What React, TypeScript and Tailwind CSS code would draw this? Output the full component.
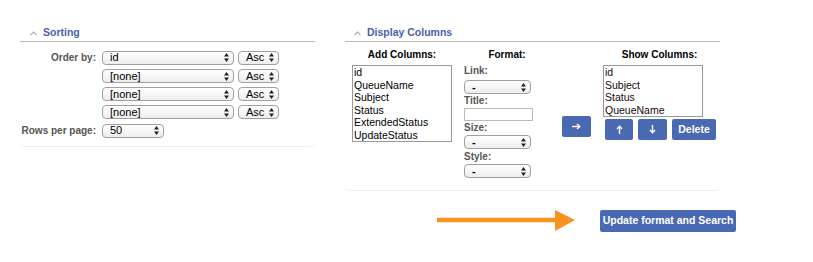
import React from "react";

const font = { fontFamily: '"Liberation Sans", Arial, sans-serif' };

function Updown() {
  return (
    <svg width="5" height="9" viewBox="0 0 5 9" className="shrink-0">
      <polygon points="2.5,0 5,3.5 0,3.5" fill="#222" />
      <polygon points="0,5.5 5,5.5 2.5,9" fill="#222" />
    </svg>
  );
}

function Sel({ value, className }: { value: string; className: string }) {
  return (
    <div
      className={`${className} h-[14px] flex items-center justify-between rounded-[4px] border border-[#a0a0a0] bg-gradient-to-b from-white to-[#ededed] pl-[7px] pr-[4px] text-[11px] leading-none text-black`}
    >
      <span>{value}</span>
      <Updown />
    </div>
  );
}

function Chevron() {
  return (
    <svg width="7" height="5" viewBox="0 0 7 5" className="shrink-0">
      <polyline points="0.5,4 3.5,1 6.5,4" fill="none" stroke="#b0b0b0" strokeWidth="1.2" />
    </svg>
  );
}

function Header({ title, indent }: { title: string; indent: string }) {
  return (
    <div className={`h-[17px] flex items-center gap-[6px] border-b border-[#b8b8b8] ${indent}`}>
      <Chevron />
      <span className="text-[10.5px] font-bold text-[#4a5fa9]">{title}</span>
    </div>
  );
}

function Btn({ children, className }: { children: React.ReactNode; className: string }) {
  return (
    <div
      className={`${className} h-[21px] flex items-center justify-center rounded-[2px] bg-[#4a69b3] text-[10.5px] font-bold text-white`}
    >
      {children}
    </div>
  );
}

const sortRows = ["id", "[none]", "[none]", "[none]"];
const addCols = ["id", "QueueName", "Subject", "Status", "ExtendedStatus", "UpdateStatus"];
const showCols = ["id", "Subject", "Status", "QueueName"];

export default function App() {
  return (
    <div className="w-[813px] h-[262px] bg-white pt-[25px] pl-[20px]" style={font}>
      <div className="flex items-start gap-[30px]">
        {/* Sorting */}
        <div className="w-[295px] rounded-b-[5px] pb-[8px] shadow-[0_1px_1px_rgba(0,0,0,0.07)]">
          <Header title="Sorting" indent="pl-[10px]" />
          <div className="mt-[8px] flex flex-col gap-[4px]">
            {sortRows.map((v, i) => (
              <div key={i} className="flex items-center">
                <div className="w-[77px] pr-[1px] text-right text-[10px] font-bold text-[#555]">
                  {i === 0 ? "Order by:" : ""}
                </div>
                <Sel value={v} className="ml-[5px] w-[132px]" />
                <Sel value="Asc" className="ml-[4px] w-[41px]" />
              </div>
            ))}
            <div className="flex items-center">
              <div className="w-[77px] pr-[1px] text-right text-[10px] font-bold text-[#555]">Rows per page:</div>
              <Sel value="50" className="ml-[5px] w-[62px]" />
            </div>
          </div>
        </div>

        {/* Display Columns */}
        <div className="w-[375px] rounded-b-[5px] pb-[12px] shadow-[0_1px_1px_rgba(0,0,0,0.07)]">
          <Header title="Display Columns" indent="pl-[9px]" />
          <div className="mt-[7px] flex items-start pl-[7px]">
            <div className="w-[100px]">
              <div className="h-[12px] text-center text-[10px] font-bold leading-[12px] text-black">Add Columns:</div>
              <div className="mt-[4px] h-[77px] border border-[#999] pl-[1px] text-[10.5px] leading-[12.6px] text-black">
                {addCols.map((c) => (
                  <div key={c}>{c}</div>
                ))}
              </div>
            </div>

            <div className="ml-[12px] w-[86px]">
              <div className="h-[12px] text-center text-[10px] font-bold leading-[12px] text-black">Format:</div>
              <div className="mt-[4px] text-[10px] font-bold leading-[11px] text-[#555]">
                <div className="mt-[1px]">Link:</div>
                <Sel value="-" className="mt-[4px] w-[67px]" />
                <div className="mt-[1px]">Title:</div>
                <div className="mt-[2px] h-[13px] w-[69px] border border-[#bbb] bg-white" />
                <div className="mt-[1px]">Size:</div>
                <Sel value="-" className="mt-[2px] w-[67px]" />
                <div className="mt-[2px]">Style:</div>
                <Sel value="-" className="mt-[2px] w-[67px]" />
              </div>
            </div>

            <Btn className="ml-[12px] mt-[67px] w-[29px]">
              <svg width="9" height="7" viewBox="0 0 9 7">
                <line x1="0" y1="3.5" x2="7.5" y2="3.5" stroke="white" strokeWidth="1.4" />
                <polyline points="5,1 7.8,3.5 5,6" fill="none" stroke="white" strokeWidth="1.4" />
              </svg>
            </Btn>

            <div className="ml-[12px] w-[113px]">
              <div className="h-[12px] text-center text-[10px] font-bold leading-[12px] text-black">Show Columns:</div>
              <div className="mt-[4px] h-[52px] w-[100px] border border-[#999] pl-[1px] text-[10.5px] leading-[12.6px] text-[#1a0606]">
                {showCols.map((c) => (
                  <div key={c}>{c}</div>
                ))}
              </div>
              <div className="mt-[2px] ml-[2px] flex gap-[5px]">
                <Btn className="w-[28px]">
                  <svg width="7" height="9" viewBox="0 0 7 9">
                    <line x1="3.5" y1="1.5" x2="3.5" y2="9" stroke="white" strokeWidth="1.4" />
                    <polyline points="1,4 3.5,1.2 6,4" fill="none" stroke="white" strokeWidth="1.4" />
                  </svg>
                </Btn>
                <Btn className="w-[29px]">
                  <svg width="7" height="9" viewBox="0 0 7 9">
                    <line x1="3.5" y1="0" x2="3.5" y2="7.5" stroke="white" strokeWidth="1.4" />
                    <polyline points="1,5 3.5,7.8 6,5" fill="none" stroke="white" strokeWidth="1.4" />
                  </svg>
                </Btn>
                <Btn className="w-[44px]">Delete</Btn>
              </div>
            </div>
          </div>
        </div>
      </div>

      <div className="mt-[20px] flex items-center pl-[417px]">
        <svg width="139" height="22" viewBox="0 0 139 22">
          <line x1="0" y1="10" x2="120" y2="10" stroke="#f7931e" strokeWidth="4.5" />
          <polygon points="118,0 138,10 118,21" fill="#f7931e" />
        </svg>
        <div className="ml-[24px] h-[22px] w-[136px] flex items-center justify-center rounded-[2px] bg-[#4a69b3] text-[10.5px] font-bold text-white">
          Update format and Search
        </div>
      </div>
    </div>
  );
}
